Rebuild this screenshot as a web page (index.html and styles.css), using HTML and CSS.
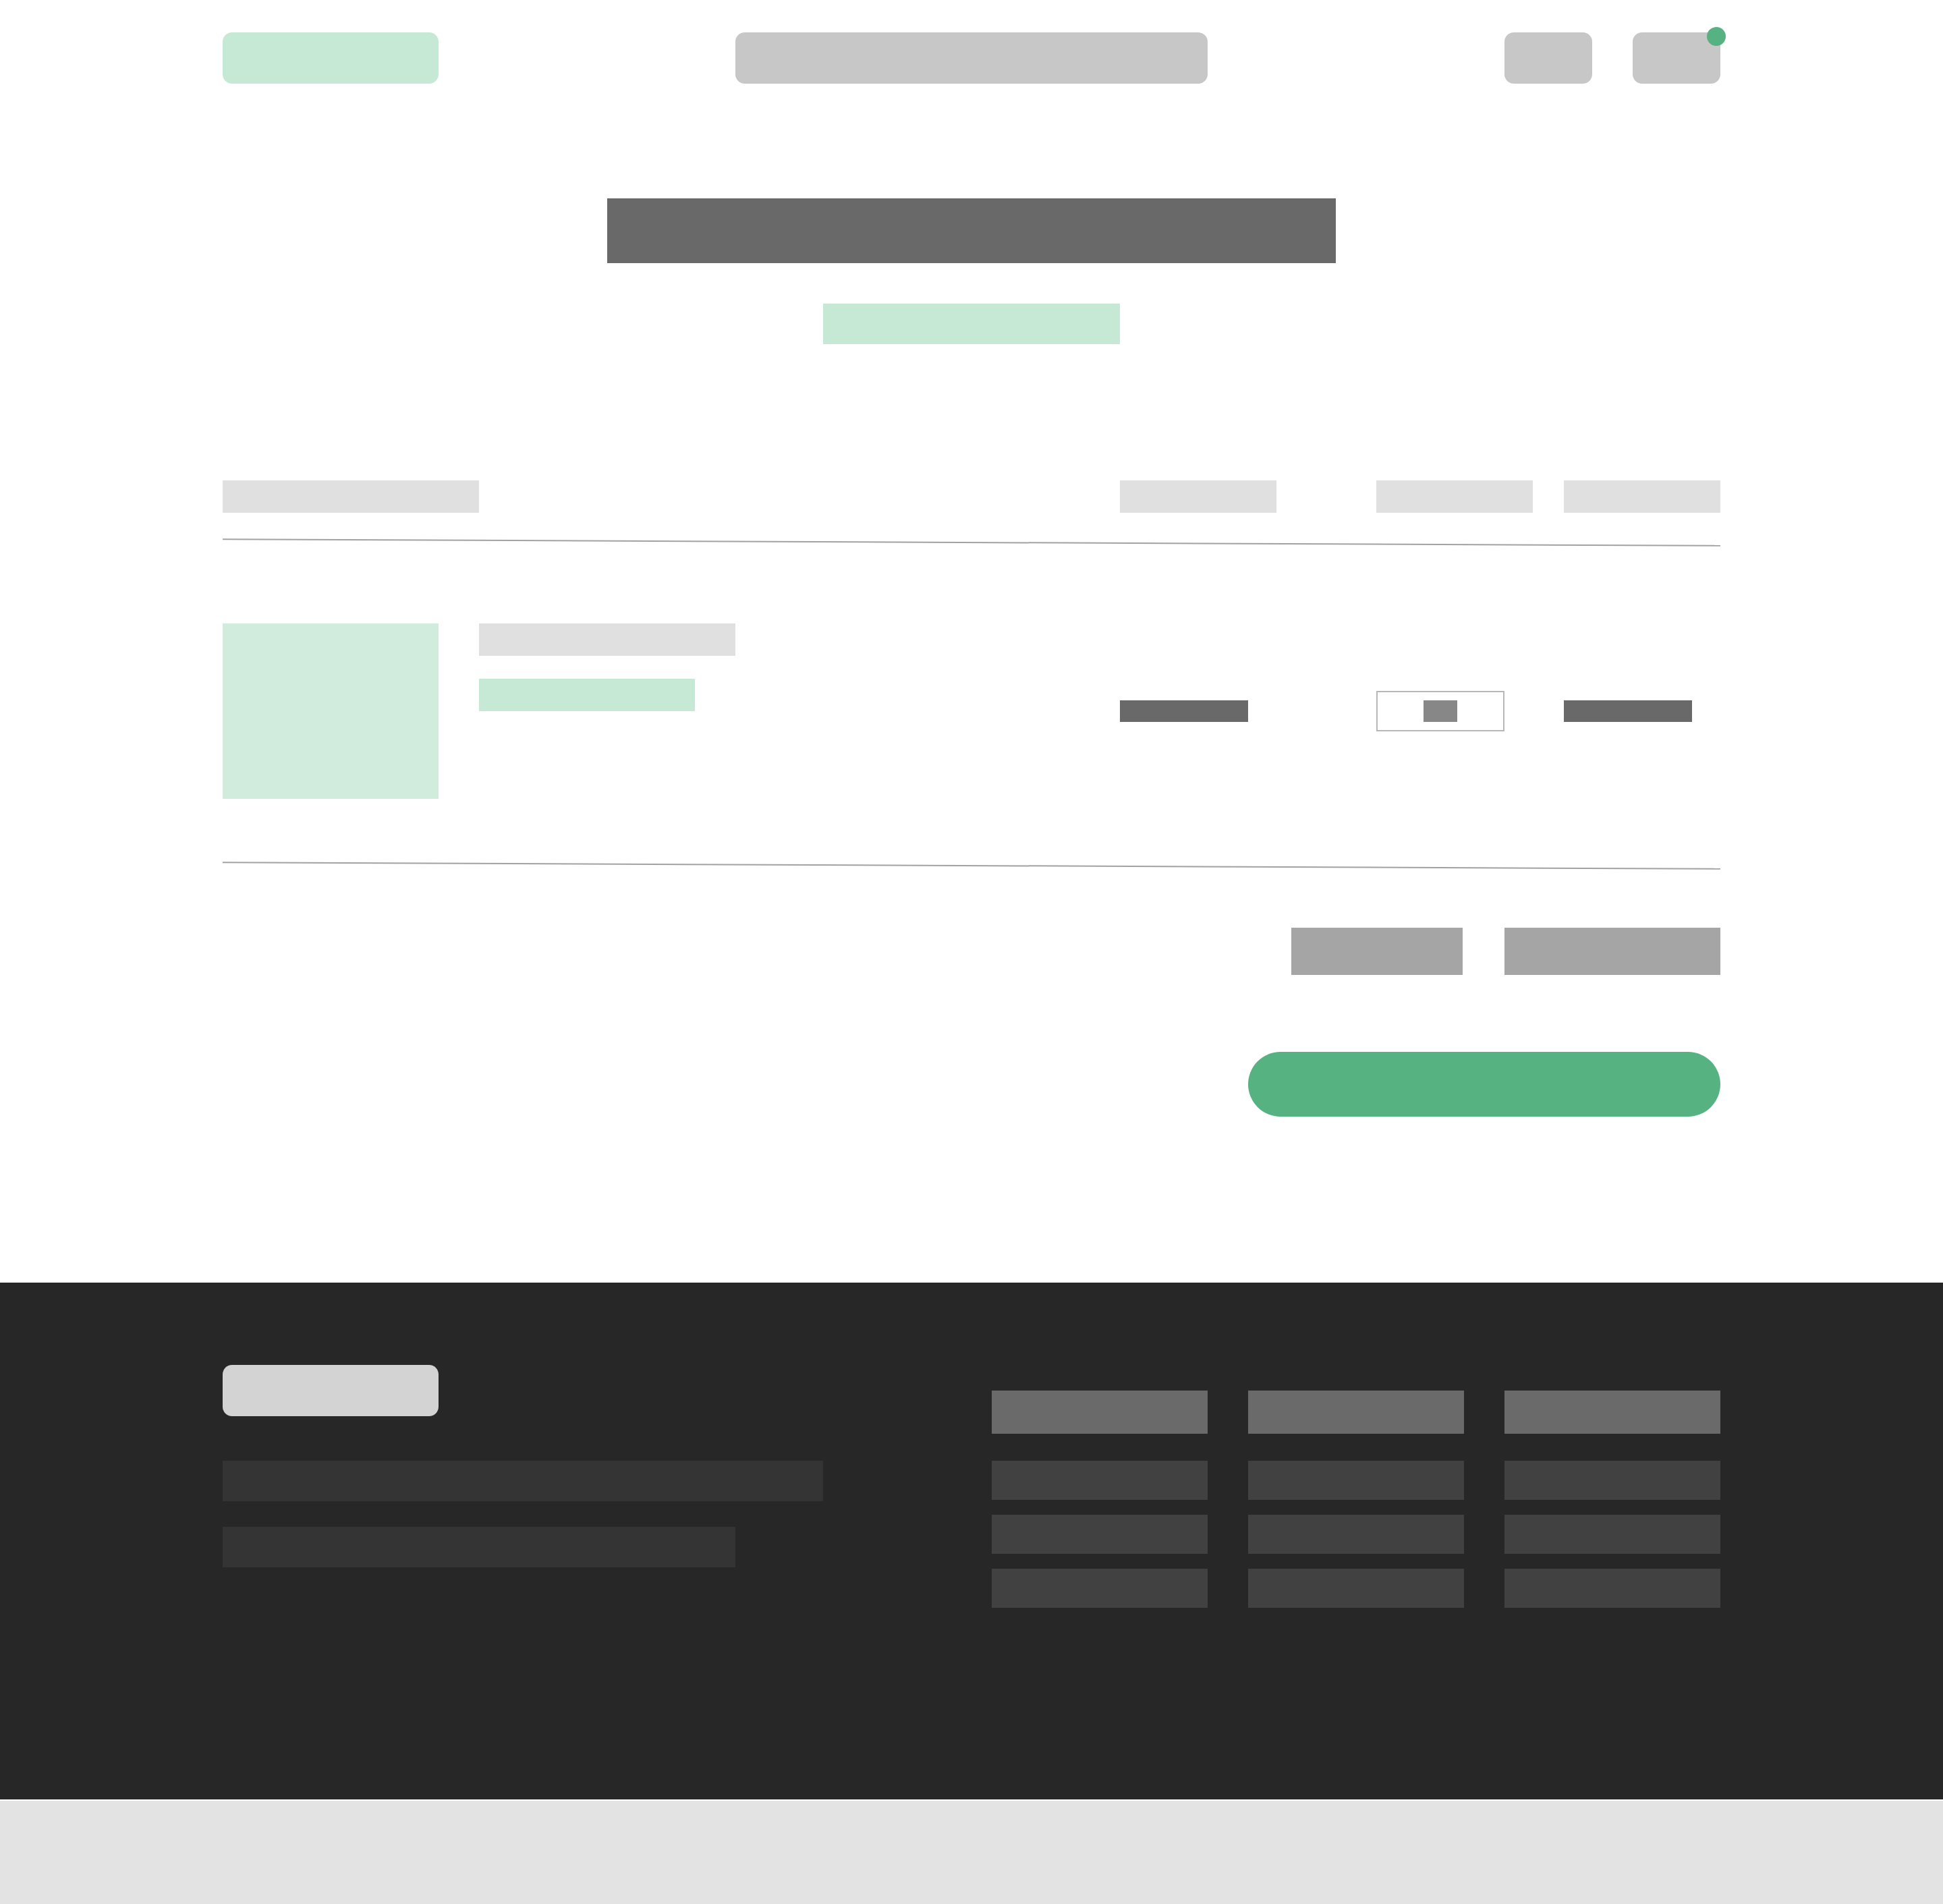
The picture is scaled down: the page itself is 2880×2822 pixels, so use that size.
FILE: index.html
```html
<!DOCTYPE html>
<html lang="en">
<head>
<meta charset="utf-8">
<title>Cart</title>
<link rel="stylesheet" href="styles.css">
</head>
<body>
<div class="page">
  <main class="main">
    <header class="topbar wrap">
      <div class="logo"></div>
      <div class="search"></div>
      <div class="actions">
        <div class="icon-btn"></div>
        <div class="icon-btn bag"><span class="dot"></span></div>
      </div>
    </header>

    <section class="hero">
      <div class="title"></div>
      <div class="subtitle"></div>
    </section>

    <section class="cart wrap">
      <div class="grid thead">
        <div class="th th-product"></div>
        <div class="th"></div>
        <div class="th"></div>
        <div class="th"></div>
      </div>
      <div class="rule rule-1"></div>
      <div class="grid item">
        <div class="product">
          <div class="thumb"></div>
          <div class="info">
            <div class="name"></div>
            <div class="variant"></div>
          </div>
        </div>
        <div class="cell"><div class="value"></div></div>
        <div class="cell"><div class="qty"><div class="qty-num"></div></div></div>
        <div class="cell"><div class="value"></div></div>
      </div>
      <div class="rule rule-2"></div>
      <div class="totals">
        <div class="total-label"></div>
        <div class="total-value"></div>
      </div>
      <div class="checkout-row">
        <div class="checkout"></div>
      </div>
    </section>
  </main>

  <footer class="footer">
    <div class="footer-inner wrap">
      <div class="f-about">
        <div class="f-logo"></div>
        <div class="f-text f-text-1"></div>
        <div class="f-text f-text-2"></div>
      </div>
      <div class="f-cols">
        <div class="f-col">
          <div class="f-head"></div>
          <div class="f-link"></div>
          <div class="f-link"></div>
          <div class="f-link"></div>
        </div>
        <div class="f-col">
          <div class="f-head"></div>
          <div class="f-link"></div>
          <div class="f-link"></div>
          <div class="f-link"></div>
        </div>
        <div class="f-col">
          <div class="f-head"></div>
          <div class="f-link"></div>
          <div class="f-link"></div>
          <div class="f-link"></div>
        </div>
      </div>
    </div>
  </footer>
</div>
</body>
</html>
```

FILE: styles.css
```css
* { box-sizing: border-box; }

html, body {
  margin: 0;
  padding: 0;
}

body {
  background: #e3e3e3;
  font-family: "Liberation Sans", Arial, sans-serif;
}

.page {
  background: #ffffff;
  padding-bottom: 2px;
}

.wrap {
  width: 2220px;
  margin: 0 auto;
}

.main {
  padding: 48px 0 246px;
}

/* header */
.topbar {
  display: flex;
  justify-content: space-between;
  align-items: center;
  height: 76px;
}

.logo {
  width: 320px;
  height: 76px;
  background: #c6e9d6;
  border-radius: 14px;
}

.search {
  width: 700px;
  height: 76px;
  background: #c7c7c7;
  border-radius: 14px;
}

.actions {
  display: flex;
  gap: 60px;
}

.icon-btn {
  width: 130px;
  height: 76px;
  background: #c7c7c7;
  border-radius: 14px;
  position: relative;
}

.dot {
  position: absolute;
  top: -8px;
  right: -8px;
  width: 28px;
  height: 28px;
  border-radius: 50%;
  background: #56b281;
}

/* hero */
.hero {
  display: flex;
  flex-direction: column;
  align-items: center;
  padding-top: 170px;
}

.title {
  width: 1080px;
  height: 96px;
  background: #696969;
}

.subtitle {
  width: 440px;
  height: 60px;
  margin-top: 60px;
  background: #c6e9d6;
}

/* cart */
.cart {
  padding-top: 202px;
}

.grid {
  display: grid;
  grid-template-columns: 1330px 380px 278px 232px;
}

.th {
  width: 232px;
  height: 48px;
  background: #e0e0e0;
}

.th-product {
  width: 380px;
}

.rule {
  height: 2px;
  background: #a2a2a2;
  transform: rotate(0.25deg);
}

.rule-1 { margin-top: 43px; }

.item {
  padding: 119px 0 98px;
  align-items: center;
}

.product {
  display: flex;
  gap: 60px;
}

.thumb {
  width: 320px;
  height: 260px;
  background: #d1ebdd;
}

.info {
  display: flex;
  flex-direction: column;
  gap: 34px;
}

.name {
  width: 380px;
  height: 48px;
  background: #e0e0e0;
}

.variant {
  width: 320px;
  height: 48px;
  background: #c6e9d6;
}

.cell {
  display: flex;
  align-items: center;
}

.value {
  width: 190px;
  height: 32px;
  background: #696969;
}

.qty {
  width: 190px;
  height: 60px;
  border: 2px solid #b7b7b7;
  display: flex;
  align-items: center;
  justify-content: center;
}

.qty-num {
  width: 50px;
  height: 32px;
  background: #878787;
}

.totals {
  display: flex;
  justify-content: flex-end;
  gap: 62px;
  margin-top: 91px;
}

.total-label,
.total-value {
  height: 70px;
  background: #a5a5a5;
}

.total-label { width: 254px; }
.total-value { width: 320px; }

.checkout-row {
  display: flex;
  justify-content: flex-end;
  margin-top: 114px;
}

.checkout {
  width: 700px;
  height: 96px;
  border-radius: 48px;
  background: #56b281;
}

/* footer */
.footer {
  background: #272727;
  padding: 122px 0 284px;
}

.footer-inner {
  display: flex;
  justify-content: space-between;
  align-items: flex-start;
}

.f-about {
  display: flex;
  flex-direction: column;
}

.f-logo {
  width: 320px;
  height: 76px;
  border-radius: 14px;
  background: #d3d3d3;
}

.f-text {
  height: 60px;
  background: #343434;
}

.f-text-1 {
  width: 890px;
  margin-top: 66px;
}

.f-text-2 {
  width: 760px;
  margin-top: 38px;
}

.f-cols {
  display: flex;
  gap: 60px;
  margin-top: 38px;
}

.f-col {
  display: flex;
  flex-direction: column;
  width: 320px;
  gap: 22px;
}

.f-head {
  height: 64px;
  background: #6a6a6a;
  margin-bottom: 18px;
}

.f-link {
  height: 58px;
  background: #414141;
}
```
